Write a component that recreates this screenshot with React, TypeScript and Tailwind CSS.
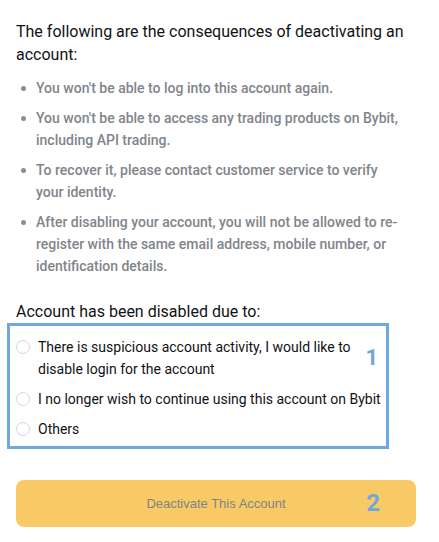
const bullets = [
  "You won't be able to log into this account again.",
  "You won't be able to access any trading products on Bybit, including API trading.",
  "To recover it, please contact customer service to verify your identity.",
  "After disabling your account, you will not be allowed to re-register with the same email address, mobile number, or identification details.",
];

const reasons = [
  "There is suspicious account activity, I would like to disable login for the account",
  "I no longer wish to continue using this account on Bybit",
  "Others",
];

export default function App() {
  return (
    <main
      className="w-[439px] h-[542px] bg-white px-4 pt-[20px]"
      style={{ fontFamily: 'Roboto, "Liberation Sans", sans-serif' }}
    >
      <h2 className="text-[16px] leading-[23px] text-[#121214] pr-4">
        The following are the consequences of deactivating an account:
      </h2>

      <ul className="mt-[11px] flex flex-col gap-[8px]">
        {bullets.map((b) => (
          <li key={b} className="flex text-[14px] leading-[22px] font-medium text-[#81858c]">
            <span className="w-[20px] shrink-0 pl-[5px] pt-[9px]">
              <span className="block w-[5px] h-[5px] rounded-full bg-[#8a8e94]" />
            </span>
            <span className="pr-[16px]">{b}</span>
          </li>
        ))}
      </ul>

      <p className="mt-[24px] text-[16px] leading-[22px] text-[#121214]">
        Account has been disabled due to:
      </p>

      <div className="-ml-[9px] w-[382px] border-[3px] border-[#6fa8dc] pl-[6px] pr-[4px] pt-[10px] pb-[6px]">
        <div className="relative flex flex-col gap-[8px]">
          {reasons.map((r, i) => (
            <label key={r} className="flex items-start gap-[8px] text-[14px] leading-[22px] text-[#121214]">
              <span className="mt-[4px] w-[14px] h-[14px] shrink-0 rounded-full border border-[#d5d7db] bg-white" />
              <span className={i === 0 ? "pr-[24px]" : ""}>{r}</span>
            </label>
          ))}
          <span className="absolute right-[4px] top-[11px] text-[22px] font-bold leading-none text-[#6fa8dc]">
            1
          </span>
        </div>
      </div>

      <button
        className="relative mt-[31px] flex h-[47px] w-[400px] items-center justify-center rounded-[8px] bg-[#f8ca66] text-[13px] text-[#7f8288]"
        style={{ fontFamily: '"Liberation Sans Narrow", "Liberation Sans", sans-serif' }}
      >
        Deactivate This Account
        <span
          className="absolute right-[36px] top-[9px] text-[24px] font-bold leading-[28px] text-[#6fa8dc]"
          style={{ fontFamily: 'Roboto, sans-serif' }}
        >
          2
        </span>
      </button>
    </main>
  );
}
